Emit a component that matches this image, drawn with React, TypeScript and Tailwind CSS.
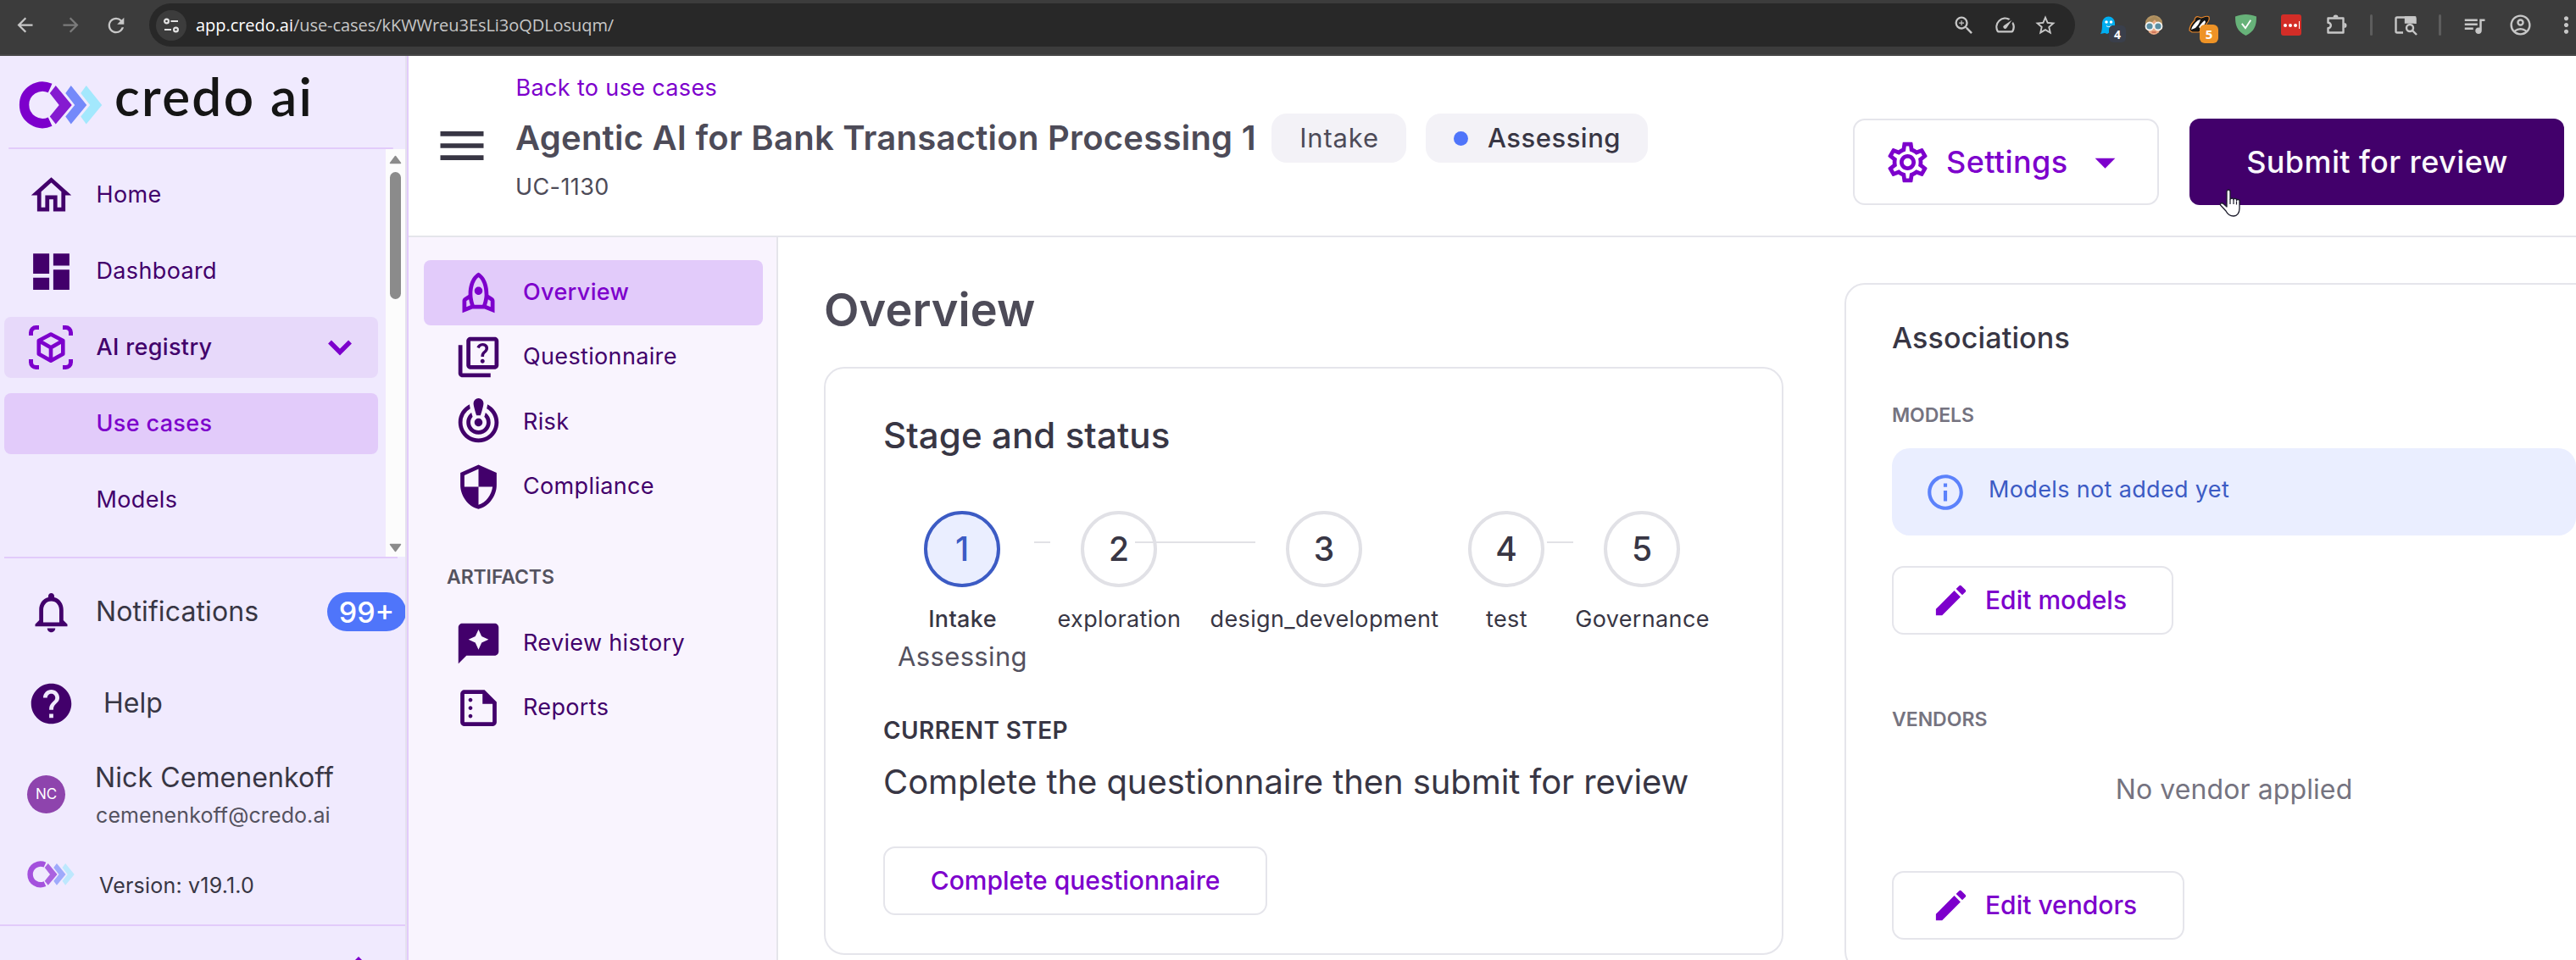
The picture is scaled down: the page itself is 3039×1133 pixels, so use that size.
import type { ReactNode } from "react";
import {
  MdArrowBack,
  MdArrowDropDown,
  MdArrowForward,
  MdCrisisAlert,
  MdDashboard,
  MdEdit,
  MdHelp,
  MdInfoOutline,
  MdMenu,
  MdMoreVert,
  MdNotificationsNone,
  MdOutlineAccountCircle,
  MdOutlineExtension,
  MdOutlineHome,
  MdOutlineQuiz,
  MdOutlineRocket,
  MdOutlineSettings,
  MdOutlineSpeed,
  MdOutlineSummarize,
  MdQueueMusic,
  MdRefresh,
  MdReviews,
  MdSecurity,
  MdStarOutline,
  MdZoomIn,
} from "react-icons/md";

function CredoMark({ className }: { className: string }) {
  return (
    <svg viewBox="22.5 96 98.5 56" className={className}>
      <path d="M59.4 104A21.7 21.7 0 1 0 59.4 143.6" fill="none" stroke="#7d00cc" strokeWidth="11.4" />
      <path d="M66 101 85 124 66 146.500 59 137.500 70 124 59 110z" fill="#851ad0" />
      <path d="M84 101 102.500 124 84 146.500 77.500 137.500 88.500 124 77.500 110z" fill="#7489fa" />
      <path d="M102 101 120.500 124 102 146.500 95.500 137.500 106.500 124 95.500 110z" fill="#a3e8fd" />
    </svg>
  );
}

function RegistryIcon() {
  return (
    <svg viewBox="0 0 52 52" className="size-[52px]" fill="none" stroke="#7d00cc">
      <path
        strokeWidth="5"
        d="M2.500 12V8.500a6 6 0 0 1 6-6H12M40 2.500h3.500a6 6 0 0 1 6 6V12M49.500 40v3.500a6 6 0 0 1-6 6H40M12 49.500H8.500a6 6 0 0 1-6-6V40"
      />
      <path strokeWidth="4.6" strokeLinejoin="round" d="M26 10.500 40.300 18v15.800L26 41.700 11.800 33.800V18zM11.800 18 26 26.200 40.300 18M26 26.200v15.500" />
    </svg>
  );
}

function ToolSlot({ children }: { children: ReactNode }) {
  return <div className="relative flex h-[51px] w-[54px] shrink-0 items-center justify-center">{children}</div>;
}

function ToolDivider() {
  return (
    <div className="flex w-[27px] shrink-0 justify-center">
      <div className="h-[25px] w-[3px] rounded-full bg-[#5d5d5d]" />
    </div>
  );
}

function BrowserBar() {
  return (
    <div className="flex h-[66px] shrink-0 items-start border-b-2 border-[#474747] bg-[#3c3c3c] pt-1 pl-[2px] text-[#c7c7c7]">
      <ToolSlot>
        <MdArrowBack size={27} />
      </ToolSlot>
      <ToolSlot>
        <MdArrowForward size={27} className="text-[#7b7b7b]" />
      </ToolSlot>
      <ToolSlot>
        <MdRefresh size={28} />
      </ToolSlot>
      <div className="ml-3 flex h-[51px] w-[2272px] shrink-0 items-center rounded-full bg-[#282828] pr-[11px] pl-2">
        <div className="flex size-9 items-center justify-center rounded-full bg-[#3c3c3c]">
          <svg viewBox="0 0 20 20" className="size-5" fill="none" stroke="#e3e3e3" strokeWidth="2.2">
            <circle cx="4.500" cy="5" r="2.400" />
            <path d="M9.500 5H18M2 15h8" />
            <circle cx="15.500" cy="15" r="2.400" />
          </svg>
        </div>
        <div className="ml-[11px] flex-1 font-['Open_Sans',sans-serif] text-[20px] leading-[28px] tracking-[-0.05px] text-[#c7c7c7]">
          <span className="text-white">app.credo.ai</span>/use-cases/kKWWreu3EsLi3oQDLosuqm/
        </div>
        <div className="flex w-12 justify-center">
          <MdZoomIn size={28} />
        </div>
        <div className="flex w-12 justify-center">
          <MdOutlineSpeed size={27} />
        </div>
        <div className="flex w-12 justify-center">
          <MdStarOutline size={28} />
        </div>
      </div>
      <div className="ml-3 flex h-[51px] items-center">
        <ToolSlot>
          <svg viewBox="0 0 18 22" className="h-[22px] w-[18px]">
            <path d="M2 8a7 7 0 0 1 15 0v11l-3 2-3-2-3 2-3-1-5 1c2-3 2-8 2-13z" fill="#00aef0" />
            <circle cx="7" cy="7" r="1.800" fill="#fff" />
            <circle cx="12.500" cy="7" r="1.800" fill="#fff" />
            <path d="M7 11.500c1.500 1.500 4 1.500 5.500 0" stroke="#fff" fill="none" />
          </svg>
          <span className="absolute top-[26px] left-[28px] flex h-5 w-5 items-center justify-center rounded-[5px] bg-[#3a3f4b] font-['Open_Sans',sans-serif] text-[14px] font-bold text-white">
            4
          </span>
        </ToolSlot>
        <ToolSlot>
          <svg viewBox="0 0 24 24" className="size-6">
            <path d="M2 16V9a10 9 0 0 1 20 0v7l-3 2H5z" fill="#b39464" />
            <ellipse cx="12" cy="14" rx="8" ry="9" fill="#e9a983" />
            <path d="M4 10c4 0 7-2 9-5 2 3 4 5 7 5V6L13 1 4 6z" fill="#a98a5a" />
            <circle cx="7" cy="13" r="4.500" fill="#5b8fa3" stroke="#f4f4f4" strokeWidth="1.800" />
            <circle cx="17" cy="13" r="4.500" fill="#5b8fa3" stroke="#f4f4f4" strokeWidth="1.800" />
            <path d="M9.500 20h5" stroke="#c55f4a" strokeWidth="1.400" />
          </svg>
        </ToolSlot>
        <ToolSlot>
          <svg viewBox="0 0 26 26" className="-mt-1 size-[26px]">
            <path d="M1 21c0-5 3-9 6-12 0-3 2-5 5-4l3 1c3-1 7-3 9-1 1 3-1 6-3 8l-2 6-7 4-8 0z" fill="#161616" stroke="#e8872b" strokeWidth="1.200" />
            <path d="M3 20c1-4 4-8 8-11l3-1c-1 4-3 7-6 10zM12 17c2-3 4-6 7-8l1 2c-1 3-3 6-6 8z" fill="#fff" />
          </svg>
          <span className="absolute top-[25px] left-[27px] flex h-[22px] w-[22px] items-center justify-center rounded-[6px] bg-[#ee9326] font-['Open_Sans',sans-serif] text-[15px] font-bold text-white">
            5
          </span>
        </ToolSlot>
        <ToolSlot>
          <svg viewBox="0 0 24 24" className="size-[25px]">
            <path d="M12 0C8 0 4 .8 0 2.500 0 13 2 19 12 24 22 19 24 13 24 2.500 20 .8 16 0 12 0z" fill="#67b279" />
            <path d="m7.500 10.500 4 5 6-9" fill="none" stroke="#fff" strokeWidth="1.800" />
          </svg>
        </ToolSlot>
        <ToolSlot>
          <div className="flex h-[25px] w-6 items-center justify-center gap-[2px] rounded-[3px] bg-[#d32d27]">
            <i className="size-1 rounded-full bg-white" />
            <i className="size-1 rounded-full bg-white" />
            <i className="size-1 rounded-full bg-white" />
            <i className="h-[9px] w-px bg-white" />
          </div>
        </ToolSlot>
        <ToolSlot>
          <svg viewBox="0 0 26 26" className="-mt-[2px] size-[26px]" fill="none" stroke="currentColor" strokeWidth="2.400" strokeLinejoin="round">
            <path d="M2.500 5.500h18v17h-18v-5.200a3.300 3.300 0 0 0 0-6.600z" />
            <path d="M8.500 4.500a3 3 0 0 1 6 0zM21.500 11a3 3 0 0 1 0 6z" fill="currentColor" stroke="none" />
          </svg>
        </ToolSlot>
        <ToolDivider />
        <ToolSlot>
          <svg viewBox="0 0 28 24" className="h-6 w-7" fill="none" stroke="currentColor" strokeWidth="2.400">
            <path d="M11 20.500H4a1.500 1.500 0 0 1-1.500-1.500V4A1.500 1.500 0 0 1 4 2.500h20A1.500 1.500 0 0 1 25.500 4v6" />
            <path d="M14 2.500h11v6H14z" fill="currentColor" />
            <circle cx="19" cy="15" r="4" />
            <path d="m22 18 5 5" />
          </svg>
        </ToolSlot>
        <ToolDivider />
        <ToolSlot>
          <MdQueueMusic size={30} />
        </ToolSlot>
        <ToolSlot>
          <MdOutlineAccountCircle size={29} />
        </ToolSlot>
        <ToolSlot>
          <MdMoreVert size={31} />
        </ToolSlot>
      </div>
    </div>
  );
}

function SideItem({ icon, label, tone, trailing }: { icon?: ReactNode; label: string; tone: string; trailing?: ReactNode }) {
  return (
    <div className={`flex h-[72px] w-[441px] shrink-0 items-center rounded-lg pr-6 ${tone}`}>
      <div className="flex w-[107px] shrink-0 justify-center pl-[3px]">{icon}</div>
      <span className="flex-1 pl-[1.5px] text-[27px] tracking-[0.35px]">{label}</span>
      {trailing}
    </div>
  );
}

function Sidebar() {
  return (
    <aside className="flex w-[482px] shrink-0 border-r-2 border-[#e2cbfa]">
      <div className="flex w-[480px] flex-col overflow-hidden border-r-2 border-[#e5e1ef] bg-[#f0eafe]">
        <div className="flex h-[108px] shrink-0 items-start pl-[22px]">
          <CredoMark className="mt-[30px] h-[56px] w-[99px]" />
          <span className="mt-[9px] ml-[14px] font-['Lato',sans-serif] text-[62px] leading-[76px] font-semibold tracking-[2.3px] whitespace-nowrap text-[#151515]">
            credo ai
          </span>
        </div>
        <div className="mr-[14px] ml-[10px] h-[2px] shrink-0 rounded-full bg-[#e2cbfa]" />
        <div className="flex h-[481px] shrink-0">
          <nav className="flex w-[455px] flex-col gap-[18px] pt-[18px] pl-[5px] text-[#42006b]">
            <SideItem icon={<MdOutlineHome size={57} />} label="Home" tone="" />
            <SideItem icon={<MdDashboard size={57} />} label="Dashboard" tone="" />
            <SideItem
              icon={<RegistryIcon />}
              label="AI registry"
              tone="bg-[#e7d9fa] font-medium"
              trailing={
                <svg viewBox="0 0 34 20" className="mr-1 h-5 w-[34px]" fill="none" stroke="#7d00cc" strokeWidth="5.500">
                  <path d="m5 3.500 12 12 12-12" />
                </svg>
              }
            />
            <SideItem label="Use cases" tone="bg-[#e2cbfa] font-medium text-[#7d00cc]" />
            <SideItem label="Models" tone="" />
          </nav>
          <div className="flex w-[23px] flex-col items-center bg-[#fcfcfc] pt-[7px] pb-[5px]">
            <svg viewBox="0 0 15 11" className="h-[11px] w-[15px]">
              <path d="M7.500 1.500 13.500 9.500h-12z" fill="#8b8b8b" stroke="#8b8b8b" strokeWidth="1.500" strokeLinejoin="round" />
            </svg>
            <div className="mt-[9px] h-[150px] w-[13px] rounded-full bg-[#8b8b8b]" />
            <svg viewBox="0 0 15 11" className="mt-auto h-[11px] w-[15px]">
              <path d="M7.500 9.500 13.500 1.500h-12z" fill="#8b8b8b" stroke="#8b8b8b" strokeWidth="1.500" strokeLinejoin="round" />
            </svg>
          </div>
        </div>
        <div className="mr-[9px] ml-[5px] h-[2px] shrink-0 bg-[#e2cbfa]" />
        <div className="flex h-[432px] shrink-0 flex-col pt-[31px] text-[#383644]">
          <div className="flex h-16 shrink-0 items-center">
            <MdNotificationsNone size={57} className="ml-[32px] shrink-0 text-[#42006b]" />
            <span className="ml-[24px] w-[273px] shrink-0 text-[32px] tracking-[0.1px]">Notifications</span>
            <span className="flex h-[46px] w-[93px] shrink-0 items-center justify-center rounded-full bg-[#4f75fa] text-[34px] font-medium text-white">
              99+
            </span>
          </div>
          <div className="mt-[44px] flex h-16 shrink-0 items-center">
            <MdHelp size={57} className="ml-[32px] text-[#42006b]" />
            <span className="ml-[33px] text-[32px]">Help</span>
          </div>
          <div className="mt-[35px] flex h-[85px] shrink-0 items-start">
            <div className="mt-[18px] ml-[32px] flex size-[45px] items-center justify-center rounded-full bg-[#8e44ad] text-[17px] text-white">
              NC
            </div>
            <div className="ml-[35px] flex flex-col gap-[4px] pt-px">
              <span className="text-[32px] leading-[40px] tracking-[0.1px]">Nick Cemenenkoff</span>
              <span className="pl-px text-[25px] leading-[40px] tracking-[0.1px] text-[#54525f]">cemenenkoff@credo.ai</span>
            </div>
          </div>
          <div className="mt-[30px] flex h-[79px] shrink-0 items-start">
            <CredoMark className="mt-1 ml-[32px] h-[32px] w-[56px] opacity-65" />
            <span className="mt-[13px] ml-[29px] text-[25px] leading-[40px] tracking-[0.2px]">Version: v19.1.0</span>
          </div>
        </div>
        <div className="h-[2px] shrink-0 bg-[#e2cbfa]" />
        <svg viewBox="0 0 40 40" className="mt-[35px] ml-[403px] size-10 shrink-0">
          <path d="M20 1 38 19l-4 4-14-14L6 23l-4-4z" fill="#7d00cc" />
        </svg>
      </div>
    </aside>
  );
}

function PageHeader() {
  return (
    <header className="flex h-[214px] shrink-0 items-start border-b-2 border-[#e5e5eb]">
      <MdMenu size={68} className="mt-[72px] ml-[29px] shrink-0 text-[#383644]" />
      <div className="ml-[28px] flex flex-1 flex-col pt-[20px] text-[#4d4b58]">
        <a className="pl-[1.5px] text-[27px] leading-9 tracking-[0.35px] text-[#7d00cc]">Back to use cases</a>
        <div className="mt-[12px] flex h-[58px] items-center">
          <h1 className="w-[893px] shrink-0 pl-px text-[40px] leading-[56px] font-semibold tracking-[0.24px] whitespace-nowrap">
            Agentic AI for Bank Transaction Processing 1
          </h1>
          <span className="flex h-[58px] w-[159px] items-center justify-center rounded-[18px] bg-[#f3f2f7] pl-px text-[31px] tracking-[0.8px]">
            Intake
          </span>
          <span className="ml-[23px] flex h-[58px] w-[262px] items-center rounded-[18px] bg-[#f3f2f7] pl-[33px] text-[31px] font-medium tracking-[0.5px] text-[#383644]">
            <i className="size-[17px] rounded-full bg-[#4f75fa]" />
            <span className="ml-[23px]">Assessing</span>
          </span>
        </div>
        <span className="mt-[11px] pl-px text-[27px] leading-9 tracking-[0.4px]">UC-1130</span>
      </div>
      <button className="mt-[74px] flex h-[102px] w-[361px] items-center rounded-[14px] border-2 border-[#e5e5eb] text-[36px] font-medium tracking-[0.4px] text-[#7d00cc]">
        <MdOutlineSettings size={57} className="ml-[34px]" />
        <span className="ml-[17px]">Settings</span>
        <MdArrowDropDown size={57} className="ml-[15px]" />
      </button>
      <button className="relative mt-[74px] mr-[14px] ml-[36px] flex h-[102px] w-[442px] items-center justify-center rounded-[12px] bg-[#42006b] pl-px text-[36px] font-medium tracking-[0.4px] text-[#faf8fc]">
        Submit for review
        <svg viewBox="0 0 26 34" className="absolute top-[83px] left-[35px] h-[34px] w-[26px]">
          <path
            d="M9 3a2 2 0 0 1 4 0v9l1-.500a1.800 1.800 0 0 1 3 1.200 1.800 1.800 0 0 1 3.500 1 1.700 1.700 0 0 1 3.500 1.300v8c0 5-2.500 9-7 9-5 0-7-2-9-6L1.500 19c-.8-2 2-3 3.500-1.500L9 21z"
            fill="#fff"
            stroke="#1b1b2b"
            strokeWidth="1.300"
            strokeLinejoin="round"
          />
          <path d="M13 12v6M17 13v5M20.500 14.500v4" stroke="#1b1b2b" strokeWidth="1.200" />
        </svg>
      </button>
    </header>
  );
}

function SectionItem({ icon, label, active }: { icon: ReactNode; label: string; active?: boolean }) {
  return (
    <div
      className={`ml-[18px] flex h-[76.5px] w-[400px] shrink-0 items-center gap-[24px] rounded-lg pl-[36px] text-[27px] tracking-[0.35px] ${
        active ? "bg-[#e2cbfa] font-medium text-[#7d00cc]" : "text-[#42006b]"
      }`}
    >
      {icon}
      <span className="-mt-px">{label}</span>
    </div>
  );
}

function SectionNav() {
  return (
    <nav className="flex w-[436px] shrink-0 flex-col border-r-2 border-[#e5e5eb] bg-[#f9f4fe] pt-[27px]">
      <SectionItem active icon={<MdOutlineRocket size={57} />} label="Overview" />
      <SectionItem icon={<MdOutlineQuiz size={57} />} label="Questionnaire" />
      <SectionItem icon={<MdCrisisAlert size={57} />} label="Risk" />
      <SectionItem icon={<MdSecurity size={57} />} label="Compliance" />
      <h2 className="mt-[52px] mb-[24px] pl-[45px] text-[23px] leading-8 font-semibold tracking-[-0.1px] text-[#54525f]">ARTIFACTS</h2>
      <SectionItem icon={<MdReviews size={57} />} label="Review history" />
      <SectionItem icon={<MdOutlineSummarize size={57} />} label="Reports" />
    </nav>
  );
}

function Step({ n, label, width, line, active }: { n: number; label: string; width: string; line?: string; active?: boolean }) {
  return (
    <div className={`relative flex shrink-0 flex-col items-center ${width}`}>
      <div
        className={`flex size-[90px] items-center justify-center rounded-full border-4 text-[39px] font-medium ${
          active ? "border-[#3c5bc4] bg-[#eaeeff] text-[#3c5bc4]" : "border-[#e1e1e6]"
        }`}
      >
        {n}
      </div>
      <span className={`mt-[20px] pl-px text-[27px] leading-9 tracking-[0.35px] ${active ? "font-medium" : ""}`}>{label}</span>
      {active && <span className="mt-[6px] pl-px text-[31px] leading-10 tracking-[0.35px] text-[#54525f]">Assessing</span>}
      {line && <div className={`absolute top-[36px] h-[2px] bg-[#e1e1e6] ${line}`} />}
    </div>
  );
}

function StageCard() {
  return (
    <section className="mt-[36px] h-[694px] rounded-[24px] border-2 border-[#e5e5eb] pt-[51px] pl-[67px] text-[#383644]">
      <h2 className="pl-px text-[42px] leading-[56px] font-medium tracking-[0.1px]">Stage and status</h2>
      <div className="mt-[61px] flex h-[192px]">
        <Step n={1} label="Intake" width="w-[188px]" line="left-[179px] w-[19px]" active />
        <Step n={2} label="exploration" width="w-[182px]" line="left-[110px] w-[142px]" />
        <Step n={3} label="design_development" width="w-[302px]" />
        <Step n={4} label="test" width="w-[128px]" line="left-[112px] w-[31px]" />
        <Step n={5} label="Governance" width="w-[192px]" />
      </div>
      <h3 className="mt-[47px] pl-px text-[28px] leading-10 font-semibold tracking-[0.4px]">CURRENT STEP</h3>
      <p className="mt-[13px] pl-px text-[40px] leading-[56px] tracking-[-0.07px]">Complete the questionnaire then submit for review</p>
      <button className="mt-[48px] ml-px flex h-[81px] w-[453px] items-center justify-center rounded-[14px] border-2 border-[#e5e5eb] text-[30px] font-medium text-[#7d00cc]">
        Complete questionnaire
      </button>
    </section>
  );
}

function EditButton({ label, className }: { label: string; className: string }) {
  return (
    <button
      className={`flex h-[81px] items-center rounded-[14px] border-2 border-[#e5e5eb] pl-[44px] text-[30px] font-medium text-[#7d00cc] ${className}`}
    >
      <MdEdit size={47} />
      <span className="ml-[17px]">{label}</span>
    </button>
  );
}

function Associations() {
  return (
    <aside className="mt-[54px] ml-[72px] h-[813px] w-[919px] shrink-0 rounded-[24px] border-2 border-[#e5e5eb] pt-[39px] pr-[54px] pl-[54px] text-[#383644]">
      <h2 className="text-[34px] leading-[48px] font-medium tracking-[0.15px]">Associations</h2>
      <h3 className="mt-[51px] text-[23px] leading-8 font-semibold tracking-[-0.1px] text-[#757380]">MODELS</h3>
      <div className="mt-[23px] flex h-[103px] items-start rounded-[21px] bg-[#eaeeff] pl-[38px] text-[#3c5bc4]">
        <MdInfoOutline size={50} className="mt-[27px] text-[#5c82fb]" />
        <span className="mt-[31px] ml-[26px] text-[27px] leading-9 tracking-[0.35px]">Models not added yet</span>
      </div>
      <EditButton label="Edit models" className="mt-[36px] w-[332px]" />
      <h3 className="mt-[84px] text-[23px] leading-8 font-semibold text-[#757380]">VENDORS</h3>
      <p className="mt-[47px] text-center text-[32px] leading-10 tracking-[0.1px] text-[#757380]">No vendor applied</p>
      <EditButton label="Edit vendors" className="mt-[76px] w-[345px]" />
    </aside>
  );
}

export default function App() {
  return (
    <div className="flex h-screen w-screen flex-col overflow-hidden bg-white font-['Inter',sans-serif]">
      <BrowserBar />
      <div className="flex min-h-0 flex-1">
        <Sidebar />
        <div className="flex min-w-0 flex-1 flex-col">
          <PageHeader />
          <div className="flex min-h-0 flex-1 overflow-hidden">
            <SectionNav />
            <main className="ml-[54px] w-[1132px] shrink-0 pt-[53px]">
              <h1 className="h-16 text-[54px] leading-[65px] font-semibold tracking-[0.1px] text-[#4d4b58]">Overview</h1>
              <StageCard />
            </main>
            <Associations />
          </div>
        </div>
      </div>
    </div>
  );
}
